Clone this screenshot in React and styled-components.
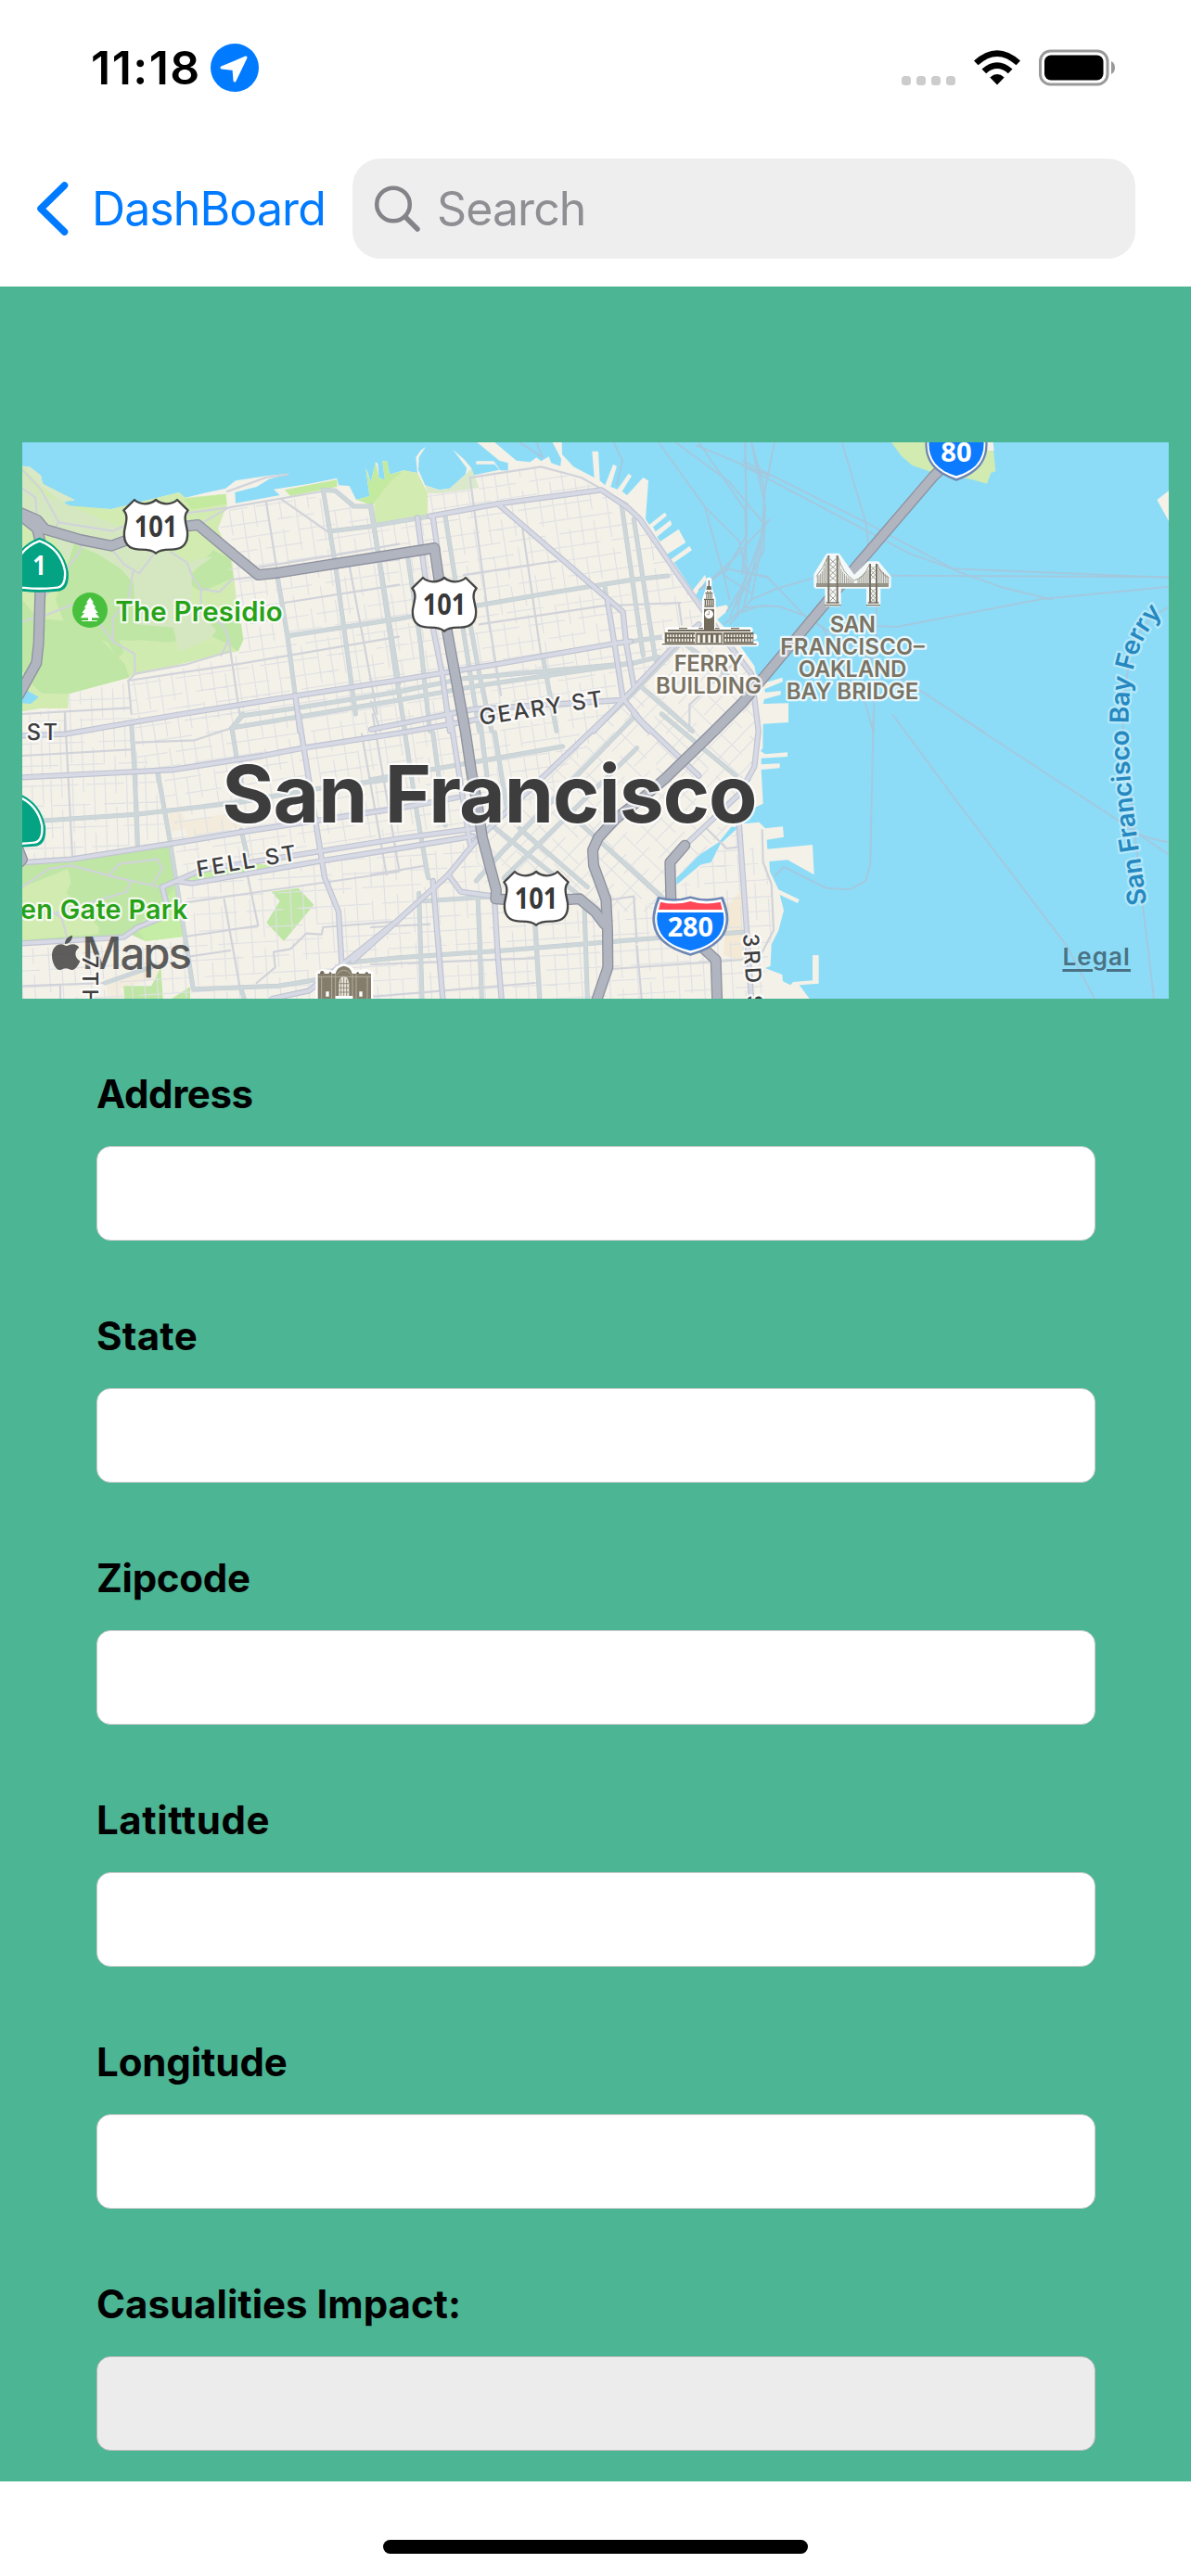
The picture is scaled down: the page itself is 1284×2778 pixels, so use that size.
import React from "react";
import styled, { createGlobalStyle } from "styled-components";

const GlobalStyle = createGlobalStyle`
  * { box-sizing: border-box; }
  body { margin: 0; background: #fff; }
`;

const Screen = styled.div`
  display: flex;
  flex-direction: column;
  width: 1284px;
  height: 2778px;
  overflow: hidden;
  background: #fff;
  color: #000;
  font-family: Inter, "Liberation Sans", sans-serif;
`;

const StatusBar = styled.header`
  display: flex;
  align-items: center;
  justify-content: space-between;
  height: 146px;
  padding: 0 80px 0 98px;
`;

const Cluster = styled.div`
  display: flex;
  align-items: center;
  gap: ${(p) => p.$gap}px;
`;

const Clock = styled.time`
  width: 119px;
  font-size: 50px;
  font-weight: 600;
  line-height: 60px;
  letter-spacing: 1.5px;
  white-space: nowrap;
`;

const NavBar = styled.nav`
  display: flex;
  align-items: center;
  height: 163px;
  padding: 0 60px 5px 36px;
`;

const BackButton = styled.a`
  display: flex;
  flex: none;
  align-items: center;
  gap: 21px;
  width: 344px;
  color: #007aff;
  font-size: 50px;
  line-height: 60px;
  letter-spacing: -0.9px;
`;

const SearchField = styled.label`
  display: flex;
  flex: 1;
  align-items: center;
  gap: 17px;
  min-width: 0;
  height: 108px;
  padding-left: 22px;
  border-radius: 30px;
  background: #eeeeef;
`;

const SearchInput = styled.input`
  flex: 1;
  min-width: 0;
  padding: 0;
  border: 0;
  outline: 0;
  background: none;
  font: 400 50px/60px Inter, "Liberation Sans", sans-serif;
  letter-spacing: -0.9px;
  &::placeholder { color: #8e8e93; opacity: 1; }
`;

const Content = styled.main`
  height: 2367px;
  padding: 168px 24px 0;
  background: #4bb594;
`;

const MapFrame = styled.section`
  position: relative;
  height: 600px;
  overflow: hidden;
`;

const MapCanvas = styled.svg`
  display: block;
  width: 1236px;
  height: 600px;
  font-family: Inter, "Liberation Sans", sans-serif;
`;

const LegalLink = styled.a`
  position: absolute;
  right: 41px;
  bottom: 29px;
  color: #4a7284;
  font-size: 26px;
  font-weight: 600;
  line-height: 32px;
  letter-spacing: 1.1px;
  text-decoration: underline;
  text-decoration-thickness: 3px;
  text-underline-offset: 4px;
`;

const Form = styled.form`
  display: flex;
  flex-direction: column;
  padding: 69px 79px 0 80px;
`;

const Field = styled.label`
  display: flex;
  flex-direction: column;
  gap: 30px;
  height: 261px;
  padding-top: 8px;
`;

const FieldName = styled.span`
  height: 52px;
  font-size: 42px;
  font-weight: 700;
  line-height: 52px;
  letter-spacing: ${(p) => p.$tracking}px;
`;

const FieldInput = styled.input`
  width: 1077px;
  height: 102px;
  border: 1px solid ${(p) => (p.disabled ? "#b9b9b9" : "#cccccc")};
  border-radius: 15px;
  outline: 0;
  padding: 0 20px;
  background: ${(p) => (p.disabled ? "#ececec" : "#fff")};
  font-size: 42px;
`;

const HomeArea = styled.footer`
  display: flex;
  flex: 1;
  justify-content: center;
  padding-top: 63px;
`;

const HomeIndicator = styled.div`
  width: 458px;
  height: 15px;
  border-radius: 8px;
  background: #000;
`;

/* ---------- map geometry (thirds of a pixel, one origin per tile) ---------- */

const TILE = {
  nw: [0, 1380], n: [1200, 1380], ne: [2400, 1380],
  sw: [0, 2310], s: [1200, 2310], se: [2400, 2310],
};

const trace = (...parts) => {
  const pts = [];
  for (const [tile, text] of parts) {
    const [ox, oy] = TILE[tile];
    for (const pair of text.trim().split(/\s+/)) {
      const [x, y] = pair.split(",").map(Number);
      pts.push(`${x + ox},${y + oy}`);
    }
  }
  return "M" + pts.join(" L");
};

const COAST = [
  ["nw", "72,128 95,130 132,158 138,185 170,205 242,238 205,240 215,255 250,262 360,267 398,258 580,213 575,232 600,230 660,215 730,200 762,175 860,160 935,152 870,170 830,195 760,213 762,248 905,222 885,203 1000,185 1090,167 1095,190 1130,192 1152,237 1195,225 1183,135 1190,150 1199,182 1215,115 1222,120 1225,165 1245,173 1237,112 1252,112 1260,155"],
  ["n", "60,155 105,142 150,150 145,100 160,78 177,65 155,100 153,140 175,190 220,205 255,200 305,155 310,135 265,75 300,105 325,135 328,158 415,140 400,122 340,122 340,112 397,112 418,142 443,142 443,118 415,110 343,51 400,51 470,110 515,115 535,100 550,112 575,97 583,118 613,128 615,105 587,51 617,51 618,90 655,130 722,165 715,80 735,80 740,175 757,190 783,122 795,128 775,195 797,203 833,152 843,160 812,210 828,222 880,165 897,175 888,300 900,317 950,278 957,288 912,325 920,340 968,303 973,317 925,357 935,372 995,332 1018,375 955,415 970,430 1030,387 1038,400 980,440 1040,530 1080,480 1085,495 1050,545 1090,590 1150,577 1158,592 1120,625 1180,690 1240,775 1245,800"],
  ["ne", "70,830 130,812 132,825 72,850 75,860 125,855 125,868 72,882 68,897 150,895 150,957"],
  ["se", "150,27 68,32 67,110 60,120 75,130 147,124 147,138 62,143 62,163 122,160 122,175 62,180 68,290 35,305 5,355 55,350 75,370 132,364 135,398 80,407 82,437 228,423 233,520 147,472 88,477 90,510 118,568 185,600 180,612 122,585 135,635 118,700 95,745 92,815 75,822 130,843 132,865 157,877 165,867 228,862 228,780 248,780 248,872 185,877 225,930"],
  ["sw", "60,930"],
];

const AREAS = [
  ["#d1ebb1", ["nw", "72,128 95,130 132,158 138,185 242,238 205,240 215,255 360,267 580,213 600,230 730,218 735,250 705,330 750,430 765,560 787,690 770,727 660,750 440,803 222,865 220,912 130,912 72,922"]],
  ["#d5e7c1", ["nw", "72,150 130,215 240,262 400,330 480,400 600,440 600,520 500,550 420,610 300,570 200,400 150,330 72,270"]],
  ["#bfe6a5", ["nw", "240,380 320,415 390,460 480,560 560,500 600,590 700,600 780,640 787,690 770,727 730,700 620,650 560,700 440,690 380,750 350,700 210,640 180,560"]],
  ["#d0ebb0", ["nw", "385,690 520,700 640,690 740,730 440,803 405,740"]],
  ["#bfe6a5", ["nw", "72,560 120,620 220,630 290,650 405,770 418,812 222,865 135,863 90,820 72,790"]],
  ["#bfe6a5", ["nw", "600,500 690,400 745,430 755,490 650,535"]],
  ["#d5e7c1", ["nw", "430,480 530,400 600,440 690,420 620,470 620,570 700,660 680,685 580,730 560,650 440,640"]],
  ["#c3ea9f", ["nw", "595,235 730,218 733,250 620,268"]],
  ["#c3ea9f", ["nw", "920,205 1090,172 1090,195 940,225"]],
  ["#d9e8c6", ["nw", "72,128 95,130 132,158 138,185 242,238 200,245 130,190"]],
  ["#8cdcf8", ["nw", "72,845 125,875 100,897 72,895"]],
  ["#c3ea9f", ["nw", "1152,237 1195,225 1183,135 1199,182 1215,115 1225,165 1245,173 1237,112 1252,112 1260,155 1310,142 1340,150 1270,190 1215,240 1205,255"]],
  ["#d1ebb1", ["n", "10,245 60,180 105,142 150,150 183,215 183,285 12,312"]],
  ["#dbe9cb", ["n", "175,190 220,205 255,200 305,155 325,135 350,198 220,217 183,215"]],
  ["#bfe6a5", ["sw", "72,488 230,478 548,430 590,720 470,735 420,712 72,735"]],
  ["#d1ebb1", ["sw", "72,560 220,500 230,545 215,580 320,690 320,712 72,732"]],
  ["#c6eda6", ["sw", "440,690 575,555 594,720 470,735"]],
  ["#c6eda6", ["sw", "590,535 660,505 830,485 900,490 620,545"]],
  ["#bfe6a5", ["sw", "878,575 965,563 1015,617 918,735 862,675 905,605"]],
  ["#f3ecdc", ["sw", "543,322 590,318 598,345 720,325 770,345 780,365 605,400 598,372 553,380"]],
  ["#f3ecdc", ["sw", "345,875 520,820 520,850 390,890 400,921 350,921"]],
  ["#bfe6a5", ["sw", "400,880 490,880 520,820 527,921 402,921"]],
  ["#bfe6a5", ["sw", "555,921 615,883 615,921"]],
  ["#f3e9d4", ["s", "1150,620 1200,570 1205,800 1140,780"]],
  ["#8cdcf8", ["s", "988,530 1055,460 1125,415 1165,365 1190,365 1130,420 1100,480 1065,488 988,553"]],
  ["#d1ebb1", ["ne", "483,51 605,51 790,51 813,75 820,145 805,150 792,185 740,170 620,150 550,125 515,95"]],
  ["#f4f1e8", ["ne", "790,51 812,51 815,78 795,78"]],
  ["#f4f1e8", ["ne", "1342,237 1380,208 1380,306"]],
];

/* hierarchy: lane < street < avenue < boulevard < freeway */
const KIND = {
  lane: { w: 3.5, fill: "#e0e1e5" },
  street: { w: 6.5, fill: "#d1d3da" },
  avenue: { w: 12, fill: "#cdd6d9", edge: "#c4cdd3", ew: 15 },
  boulevard: { w: 12, fill: "#d7d9e5", edge: "#bfc4d1", ew: 19 },
  freeway: { w: 28, fill: "#b1b5c0", edge: "#8e929f", ew: 36 },
};

const ROADS = [
  ["street", ["nw", "72,200 115,230 120,300"]],
  ["street", ["nw", "72,140 130,200 190,310 365,338 450,300 740,262 1040,210"]],
  ["street", ["nw", "190,310 170,340"]],
  ["street", ["nw", "150,545 255,410 265,380"]],
  ["street", ["nw", "360,395 400,445 450,475 500,410"]],
  ["street", ["nw", "430,470 415,560 365,620 365,695 435,735 437,800 415,822 425,930"]],
  ["street", ["nw", "550,405 605,440 620,480 650,525 710,535 750,495 1290,430"]],
  ["street", ["nw", "650,525 650,600 720,640 740,690 715,740"]],
  ["street", ["nw", "72,630 150,610 235,575"]],
  ["street", ["nw", "325,640 365,695"]],
  ["street", ["nw", "740,262 640,320"]],
  ["street", ["nw", "735,210 860,165 930,155"]],
  ["street", ["nw", "860,240 900,490"]],
  ["street", ["nw", "910,235 1060,340"]],
  ["street", ["nw", "740,690 775,930"]],
  ["street", ["nw", "415,822 760,770 1290,680"]],
  ["street", ["nw", "437,800 600,770 740,728"]],
  ["street", ["nw", "840,455 1120,410 1290,380"]],
  ["street", ["nw", "920,570 1290,512"]],
  ["street", ["nw", "1130,450 1220,930"]],
  ["street", ["nw", "72,930 420,910"]],
  ["street", ["nw", "210,925 210,985"]],
  ["avenue", ["nw", "1045,205 1085,450 1150,930"]],
  ["avenue", ["nw", "1045,205 1085,208 1145,258 1198,258 1230,450 1290,830"]],
  ["avenue", ["nw", "1070,338 1210,322"], ["n", "10,320 190,290"]],
  ["avenue", ["nw", "898,490 930,680 955,870"]],
  ["avenue", ["nw", "930,677 1290,622"], ["n", "90,622 180,605"]],
  ["avenue", ["nw", "750,975 785,935 950,912 1290,858"], ["n", "90,858 300,815 850,765"]],
  ["avenue", ["nw", "750,975 1290,885"], ["n", "90,885 350,838 850,765 930,745"]],
  ["avenue", ["sw", "785,0 750,45 765,140"]],
  ["avenue", ["sw", "425,30 435,180 445,430"]],
  ["avenue", ["sw", "510,190 548,400 625,890 900,880 1020,860"]],
  ["avenue", ["sw", "140,345 440,325 780,285 780,145"], ["sw", "780,285 1000,245 1290,208"]],
  ["avenue", ["sw", "780,375 800,460"]],
  ["avenue", ["sw", "1120,805 1290,788"], ["s", "90,788 430,765 860,730 1210,705"]],
  ["avenue", ["sw", "780,890 790,921"]],
  ["avenue", ["sw", "340,870 500,815"]],
  ["avenue", ["n", "0,255 80,800 110,985"]],
  ["avenue", ["n", "240,290 270,480 350,985"]],
  ["avenue", ["n", "120,430 160,700 190,985"]],
  ["avenue", ["n", "310,580 350,800 390,985"]],
  ["avenue", ["n", "340,580 600,535 850,495 960,483"]],
  ["avenue", ["n", "810,250 880,740"]],
  ["avenue", ["n", "850,300 920,755"]],
  ["avenue", ["n", "755,510 765,580"]],
  ["avenue", ["n", "555,740 600,985"]],
  ["avenue", ["n", "840,695 985,675"]],
  ["avenue", ["s", "105,30 150,330 185,530"]],
  ["avenue", ["s", "200,60 240,360"]],
  ["avenue", ["s", "350,0 375,200"]],
  ["avenue", ["s", "400,60 440,310"]],
  ["avenue", ["s", "0,212 280,165 620,105"]],
  ["avenue", ["s", "155,580 165,921"]],
  ["avenue", ["s", "345,580 358,921"]],
  ["avenue", ["s", "530,680 545,921"]],
  ["avenue", ["s", "690,620 700,921"]],
  ["avenue", ["s", "170,605 400,590"]],
  ["avenue", ["s", "340,540 430,440 860,0"]],
  ["avenue", ["s", "390,360 740,640"]],
  ["avenue", ["s", "480,370 700,560"]],
  ["avenue", ["s", "650,330 950,600"]],
  ["avenue", ["s", "430,530 860,110"]],
  ["avenue", ["s", "940,0 1180,200"]],
  ["avenue", ["n", "860,830 1040,985"]],
  ["avenue", ["n", "1010,700 1200,840"]],
  ["avenue", ["n", "1060,640 850,860 720,985"]],
  ["street", ["n", "320,165 550,130 680,165 830,250"]],
  ["street", ["n", "320,165 380,620 420,870"]],
  ["street", ["n", "490,330 550,740"]],
  ["street", ["n", "300,480 600,435"]],
  ["street", ["n", "350,640 750,580 1000,570"]],
  ["street", ["n", "995,570 1005,640"]],
  ["street", ["n", "0,890 30,985"]],
  ["street", ["n", "1030,985 1030,900 1180,760"]],
  ["street", ["sw", "72,135 420,115"]],
  ["street", ["sw", "210,0 235,480"]],
  ["street", ["sw", "440,92 630,85 750,45"]],
  ["street", ["sw", "72,560 160,500 230,490 380,530 520,560"]],
  ["street", ["sw", "160,650 410,575 420,545"]],
  ["street", ["sw", "170,640 200,660 220,735"]],
  ["street", ["sw", "350,525 385,485 510,470 525,500 495,550"]],
  ["street", ["sw", "600,610 1290,510"]],
  ["street", ["sw", "725,600 775,880"]],
  ["street", ["sw", "800,520 835,685 600,720"]],
  ["street", ["sw", "610,785 745,765"]],
  ["street", ["sw", "1290,670 1045,690 1040,713 990,710 940,760 885,770 890,820 830,870"]],
  ["street", ["sw", "72,880 340,870"]],
  ["street", ["sw", "195,880 195,921"]],
  ["street", ["sw", "1170,65 1250,520"]],
  ["street", ["sw", "1205,0 1290,500"]],
  ["street", ["s", "0,520 180,490"]],
  ["street", ["s", "0,690 190,680"]],
  ["street", ["s", "0,810 530,790"]],
  ["street", ["s", "780,825 1200,795"]],
  ["street", ["s", "860,750 875,921"]],
  ["street", ["s", "0,915 530,870"]],
  ["street", ["s", "1085,370 1150,435 1190,430"]],
  ["street", ["s", "1265,375 1268,480 1295,550 1302,700 1265,770"]],
  ["street", ["s", "780,600 850,590 860,740"]],
  ["street", ["s", "560,260 700,380 940,600"]],
  ["boulevard", ["sw", "72,70 210,65 440,25 590,0"], ["nw", "590,930 900,880 1290,820"], ["n", "90,820 400,770 800,700 840,695"]],
  ["boulevard", ["sw", "72,205 430,187 560,180 850,135 980,110 1290,62"], ["s", "90,62 360,15 420,5"]],
  ["boulevard", ["sw", "80,480 230,470 550,420 780,382 1290,305"], ["s", "90,305 280,270"]],
  ["boulevard", ["sw", "72,742 400,722 445,690 520,660"]],
  ["boulevard", ["sw", "525,560 540,620"]],
  ["boulevard", ["sw", "525,560 650,505 1030,445 1290,403"], ["s", "90,403 340,370"]],
  ["boulevard", ["sw", "570,540 620,548 1040,475 1290,435"], ["s", "90,435 330,395"]],
  ["boulevard", ["nw", "955,870 970,985"], ["sw", "965,0 1050,530 1095,640 1105,805 1110,900"]],
  ["boulevard", ["sw", "880,921 1000,895 1290,665"], ["s", "-60,800 250,520 340,410 770,0"], ["n", "720,985 980,710 1060,640"]],
  ["boulevard", ["n", "150,295 190,600 230,800 255,985"], ["s", "255,0 320,420"]],
  ["boulevard", ["n", "200,290 215,400"]],
  ["boulevard", ["n", "190,290 410,250 745,205 830,262 870,300 1000,490 1100,630 1230,800 1253,985"], ["s", "1240,170 1190,260 1010,430"]],
  ["boulevard", ["n", "410,250 815,600 825,700 850,840"]],
  ["boulevard", ["n", "765,565 790,720 815,880 900,985"], ["s", "850,0 1060,200"]],
  ["boulevard", ["n", "0,980 330,915 810,885"]],
  ["boulevard", ["s", "1190,350 1215,700 1230,921"]],
  ["boulevard", ["s", "200,540 220,780 232,921"]],
  ["boulevard", ["s", "400,610 410,780 422,921"]],
  ["boulevard", ["s", "250,520 290,575 400,590"]],
  ["freeway", ["nw", "40,268 120,302 145,332 260,366 360,386 500,335 640,318 750,410 835,480 900,473 1405,393 1435,600 1505,985"], ["s", "325,190 345,300 360,400 405,570 403,598 500,605 640,600"]],
  ["freeway", ["nw", "60,282 120,330 132,380 130,530 125,700 118,765 60,870"]],
  ["freeway", ["ne", "693,90 620,160 380,440 0,895"], ["s", "1110,55 950,210 880,270 790,340 735,400 717,440 720,490 760,600 765,700 766,820 725,940"]],
  ["freeway", ["s", "640,600 675,598 725,640 755,680"]],
  ["freeway", ["s", "1015,425 967,480 970,600 1000,690 1115,795 1120,940"]],
  ["freeway", ["sw", "60,440 72,470 50,495"]],
];

const FERRIES = [
  ["ne", "10,51 15,350 0,480"], ["ne", "30,51 72,200 70,330 0,600"], ["ne", "105,51 75,200 60,400 30,560 -40,640"],
  ["ne", "0,110 400,310 700,470 840,520 1005,560"], ["ne", "0,125 200,230 540,410 680,460 1380,488"],
  ["ne", "323,51 400,310 410,395"], ["ne", "480,482 1380,487"], ["ne", "435,645 500,648 970,558 1380,518"],
  ["ne", "230,490 110,525 30,560"], ["ne", "0,600 60,580 120,582 200,610 260,650 400,900 425,990"],
  ["ne", "0,470 80,485 200,610 400,740 570,850 785,990"], ["ne", "435,580 425,990"],
  ["n", "930,51 1080,260 1190,370 1215,480 1160,620"], ["n", "985,51 1160,180 1275,320 1210,500 1150,600"],
  ["n", "1060,51 1210,270 1215,470 1180,620"], ["n", "785,51 813,110 795,190"], ["n", "480,51 555,100 535,51"],
  ["n", "1050,60 1290,160"], ["n", "1210,51 1215,350 1140,480 1160,560"], ["n", "1290,300 1170,430 1060,530"],
  ["n", "1230,51 1275,260 1270,400 1180,580"], ["n", "1290,490 1150,460 1060,530"], ["n", "1290,580 1210,585 1140,640"],
  ["n", "1080,260 1140,480 1230,540"],
  ["se", "425,0 415,485 400,540 348,568 272,563 135,495 105,525"],
  ["se", "485,0 700,290 1050,750 1140,921"], ["se", "690,0 1225,350 1380,455"], ["se", "1280,388 1320,402 1380,415"],
  ["se", "1228,0 1260,300 1295,610 1332,921"], ["ne", "1380,585 1330,610 1260,700 1228,930"],
];

const grid = (angle, stepU, stepV, seed) => {
  const lines = [];
  for (let i = -60; i <= 60; i++) {
    const u = i * stepU + ((i * seed) % 9);
    lines.push(`M${u},${-3000 + ((i * 97) % 211)} V3000`);
    lines.push(`M${-3000 + ((i * 61) % 173)},${i * stepV + ((i * 5) % 7)} H3000`);
  }
  return { d: lines.join(" "), angle };
};

const NORTH = [
  ["nw", "745,265 1000,225 1160,260 1210,320"],
  ["n", "12,312 183,285 183,218 340,195 320,160 550,125 740,200 870,300 1040,540 1120,640 820,880 560,1210 340,1280"],
  ["sw", "850,460 610,520 550,410 510,190 440,140"],
  ["nw", "420,825 770,740 787,690 710,330"],
];
const WEST = [
  ["nw", "222,865 420,825"],
  ["sw", "440,120 510,190 548,425 72,480"],
  ["nw", "72,925 220,912"],
];
const SOMA = [
  ["n", "1100,680 1240,800"],
  ["s", "1250,160 1180,340 1000,520 900,640 740,640 340,540 340,400 830,-50"],
];
const SOUTH = [
  ["s", "-600,530 0,460 340,400 360,570 740,650 960,600 1190,370 1290,510 1300,700 1260,921 -1128,921 -1128,760 -590,735"],
];

const BLOCKS = [
  { id: "north", clip: trace(...NORTH), ...grid(-8.5, 43, 46, 7), at: [1200, 2100] },
  { id: "west", clip: trace(...WEST), ...grid(-2, 33, 67, 2), at: [300, 2400] },
  { id: "soma", clip: trace(...SOMA), ...grid(44, 42, 56, 5), at: [2000, 2600] },
  { id: "south", clip: trace(...SOUTH), ...grid(-3.5, 44, 49, 6), at: [1600, 2900] },
];

const Road = ({ kind, parts, edge }) => {
  const k = KIND[kind];
  return (
    <path
      d={trace(...parts)}
      fill="none"
      stroke={edge ? k.edge : k.fill}
      strokeWidth={edge ? k.ew : k.w}
      strokeLinejoin="round"
      strokeLinecap="round"
    />
  );
};

const HALO = { paintOrder: "stroke", stroke: "rgba(255,255,255,0.8)", strokeWidth: 14, strokeLinejoin: "round" };

const Label = ({ tile, x, y, size, length, angle = 0, weight = 500, fill = "#3d3d3d", anchor = "start", children }) => {
  const [ox, oy] = TILE[tile];
  return (
    <text
      {...HALO}
      transform={`translate(${ox + x} ${oy + y}) rotate(${angle})`}
      fontSize={size}
      fontWeight={weight}
      fill={fill}
      textAnchor={anchor}
      textLength={length}
    >
      {children}
    </text>
  );
};

const ShieldText = ({ y, size, width, fill, children }) => (
  <text y={y} textAnchor="middle" fontFamily='"Noto Sans", "Open Sans", sans-serif' fontWeight="700" fontSize={size} fill={fill} textLength={width} lengthAdjust="spacingAndGlyphs">
    {children}
  </text>
);

const UsShield = ({ x, y }) => (
  <g transform={`translate(${x} ${y})`}>
    <path
      d="M-69,-86 Q-57,-74 -35,-73 Q-14,-74 0,-86 Q14,-74 35,-73 Q57,-74 69,-86 L104,-52 Q91,-36 96,-14 L102,16 Q107,74 52,75 Q14,74 0,87 Q-14,74 -52,75 Q-107,74 -102,16 L-96,-14 Q-91,-36 -104,-52 Z"
      fill="#fff" stroke="#454545" strokeWidth="7" strokeLinejoin="round"
    />
    <ShieldText y={34} size={95} width={140} fill="#383838">101</ShieldText>
  </g>
);

const INTERSTATE = "M-104,-92 Q-50,-78 0,-94 Q50,-78 104,-92 Q124,-42 119,-10 Q112,62 0,93 Q-112,62 -119,-10 Q-124,-42 -104,-92 Z";

const Interstate = ({ x, y, sx = 1, sy = 1, children, width, textY = 34 }) => (
  <g transform={`translate(${x} ${y})`}>
    <g transform={`scale(${sx} ${sy})`}>
      <path d={INTERSTATE} fill="#6e87b4" stroke="#6e87b4" strokeWidth="6" strokeLinejoin="round" />
      <path d={INTERSTATE} fill="#fff" transform="scale(.955 .945)" />
      <path d="M-97,-78 Q-48,-66 0,-80 Q48,-66 97,-78 L103,-53 H-103 Z" fill="#ff4757" />
      <path d="M-106,-44 H106 Q112,-15 102,10 Q84,60 0,80 Q-84,60 -102,10 Q-112,-15 -106,-44 Z" fill="#0d7bff" />
    </g>
    <ShieldText y={textY} size={86} width={width} fill="#fff">{children}</ShieldText>
  </g>
);

const StateShield = ({ x, y, children }) => {
  const d = "M0,-86 Q75,-58 91,22 Q96,84 55,84 Q0,90 -55,84 Q-96,84 -91,22 Q-75,-58 0,-86 Z";
  return (
    <g transform={`translate(${x} ${y})`}>
      <path d={d} fill="#03a383" stroke="#03a383" strokeWidth="4" />
      <path d={d} fill="none" stroke="#fff" strokeWidth="8" transform="scale(.9 .89)" />
      {children && <ShieldText y={32} size={86} width={44} fill="#fff">{children}</ShieldText>}
    </g>
  );
};

const range = (n) => Array.from({ length: n }, (_, i) => i);

const FerryBuilding = () => (
  <g transform="translate(1200 1380)">
    <path d="M1093,497 V520 L1080,560 V655 M950,680 H1240 M945,703 H1245 M960,658 H1226 M1093,520 L1106,560 V655 M1093,530 V655" stroke="#fff" strokeWidth="18" fill="none" strokeLinejoin="round" strokeLinecap="round" />
    <g fill="#726b5b">
      <path d="M1091,497 h4 v20 h-4 Z M1087,516 h12 l3,12 h-18 Z M1087,531 h3 v7 h-3 Z M1096,531 h3 v7 h-3 Z M1081,537 h24 v4 h-24 Z M1077,557 h32 v4 h-32 Z M1078,580 h31 v4 h-31 Z M1077,590 h33 v70 h-33 Z" />
      {range(4).map((i) => <rect key={i} x={1084 + i * 5.5} y="541" width="3" height="16" />)}
      {range(5).map((i) => <rect key={i} x={1079 + i * 6.5} y="561" width="4" height="19" />)}
      <rect x="960" y="657" width="267" height="6" />
      <path d="M996,651 h27 v4 h-27 Z M1060,651 h14 v4 h-14 Z M1113,651 h14 v4 h-14 Z M1164,651 h27 v4 h-27 Z" />
      <rect x="950" y="666" width="287" height="35" />
      <rect x="941" y="702" width="306" height="4" />
    </g>
    <circle cx="1093" cy="607" r="14" fill="#fff" />
    <path d="M1093,597 V608 H1085" fill="none" stroke="#726b5b" strokeWidth="2" />
    <g fill="#f6f4ee">
      {range(10).map((i) => <path key={i} d={`M${957 + i * 9.5},673 h5 v8 h-5 Z M${957 + i * 9.5},686 h5 v10 h-5 Z M${1144 + i * 9.5},673 h5 v8 h-5 Z M${1144 + i * 9.5},686 h5 v10 h-5 Z`} />)}
      {range(5).map((i) => <rect key={i} x={1056 + i * 17} y="674" width="8" height="25" />)}
      <path d="M1048,664 h90 v3 h-90 Z M1048,664 h3 v38 h-3 Z M1136,664 h3 v38 h-3 Z" />
    </g>
  </g>
);

const BayBridge = () => (
  <g transform="translate(2400 1380)" fill="none" stroke="#7a7364">
    <path d="M278,418 H310 L362,492 L410,444 H438 L474,488 V516 H240 V480 Z M276,516 V575 H312 V516 Z M410,516 V575 H440 V516 Z" stroke="#f3f8f8" strokeWidth="16" fill="#f3f8f8" strokeLinejoin="round" />
    <g strokeWidth="2">
      <path d="M240,485 Q262,460 278,420 M310,420 Q325,475 362,498 Q395,490 412,446 M438,446 Q450,480 474,488" />
      {range(7).map((i) => <path key={i} d={`M${244 + i * 5},${482 - i * i * 1.5} V508`} />)}
      {range(9).map((i) => <path key={i} d={`M${315 + i * 5.5},${440 + Math.sqrt(i) * 21} V508`} />)}
      {range(7).map((i) => <path key={i} d={`M${375 + i * 5.5},${493 - i * 5} V508`} />)}
      {range(7).map((i) => <path key={i} d={`M${442 + i * 5.2},${456 + i * 5} V508`} />)}
      <path d="M284,428 l20,18 l-20,18 l20,18 l-20,18 M304,428 l-20,18 l20,18 l-20,18 l20,18 M284,525 l20,20 l-20,20 M304,525 l-20,20 l20,20" />
      <path d="M417,452 l14,14 l-14,14 l14,14 M431,452 l-14,14 l14,14 l-14,14 M417,525 l14,15 l-14,15 l14,12 M431,525 l-14,15 l14,15 l-14,12" />
    </g>
    <path d="M240,510 H474 M240,516 H474" strokeWidth="4" />
    <path d="M280,417 V572 M308,417 V572 M414,444 V572 M435,444 V572" strokeWidth="6" />
    <path d="M272,570 H314 M267,578 H320 M407,570 H442 M402,578 H447" strokeWidth="4" />
  </g>
);

const Mission = () => (
  <g transform="translate(0 2310)">
    <path d="M1028,935 V840 L1042,832 L1080,838 Q1090,818 1112,815 Q1134,818 1144,838 L1185,832 L1200,840 V935 Z" fill="#8a8270" stroke="#fff" strokeWidth="14" strokeLinejoin="round" />
    <path d="M1028,935 V840 H1085 Q1090,818 1112,815 Q1134,818 1139,840 H1200 V935 Z" fill="#857d6b" />
    <path d="M1035,840 Q1035,831 1042,831 Q1049,831 1049,840 Z M1063,840 q5,-12 10,0 Z M1152,840 q5,-12 10,0 Z M1180,840 q6,-12 12,0 Z" fill="#756d5c" />
    <path d="M1028,850 H1200 M1085,842 V921 M1140,842 V921 M1073,842 V921 M1152,842 V921 M1040,850 V921 M1188,850 V921 M1090,842 Q1112,815 1135,842" stroke="#b5ae9d" strokeWidth="3" fill="none" />
    <path d="M1096,921 V872 Q1098,850 1112,850 Q1127,850 1129,872 V921 Z" fill="#e8e4d9" />
    <path d="M1103,858 V921 M1112,852 V921 M1121,858 V921 M1097,872 H1128 M1097,886 H1128 M1097,900 H1128" stroke="#857d6b" strokeWidth="2.5" />
    <path d="M1054,898 h10 v16 h-10 Z M1162,898 h10 v16 h-10 Z M1085,912 h56 v9 h-56 Z" fill="#fff" />
  </g>
);

const CityMap = () => (
  <MapCanvas viewBox="72 1431 3708 1800" role="img" aria-label="Map of San Francisco">
    <defs>
      {BLOCKS.map((b) => <clipPath key={b.id} id={b.id}><path d={b.clip + "Z"} /></clipPath>)}
      <path id="ferry-route" d="M3709,2925 L3684,2750 Q3653,2560 3650,2370 L3650,2320 C3652,2190 3670,2050 3790,1960" />
    </defs>
    <rect x="72" y="1431" width="3708" height="1800" fill="#8cdcf8" />
    <path d={trace(...COAST) + "Z"} fill="#f4f1e8" />
    {AREAS.map(([fill, part], i) => <path key={i} d={trace(part) + "Z"} fill={fill} />)}
    {BLOCKS.map((b) => (
      <g key={b.id} clipPath={`url(#${b.id})`}>
        <path
          d={b.d}
          transform={`translate(${b.at[0]} ${b.at[1]}) rotate(${b.angle})`}
          fill="none"
          stroke={KIND.lane.fill}
          strokeWidth={KIND.lane.w}
          strokeDasharray="190 28 120 45 240 36"
        />
      </g>
    ))}
    <g fill="none" stroke="#a3c9df" strokeWidth="6" strokeLinejoin="round">
      {FERRIES.map((part, i) => <path key={i} d={trace(part)} />)}
    </g>
    {["street", "avenue", "boulevard", "freeway"].map((kind) => {
      const set = ROADS.filter(([k]) => k === kind);
      return (
        <g key={kind}>
          {KIND[kind].edge && set.map(([, ...parts], i) => <Road key={`e${i}`} kind={kind} parts={parts} edge />)}
          {set.map(([, ...parts], i) => <Road key={i} kind={kind} parts={parts} />)}
        </g>
      );
    })}

    <FerryBuilding />
    <BayBridge />
    <Mission />

    <g transform="translate(291 1974)">
      <circle r="57" fill="#49c03d" />
      <path d="M0,-41 L12,-25 H7 L19,-8 H13 L26,9 H18 L31,25 H6 V33 H23 V36 H-26 V33 H-6 V25 H-31 L-18,9 H-26 L-13,-8 H-19 L-7,-25 H-12 Z" fill="#fff" />
    </g>
    <Label tile="nw" x={373} y={629} size={88} length={541} weight={600} fill="#27a217">The Presidio</Label>
    <Label tile="sw" x={66} y={663} size={86} length={541} weight={600} fill="#27a217">en Gate Park</Label>
    <Label tile="sw" x={86} y={83} size={71} length={100}>ST</Label>
    <Label tile="n" x={354} y={966} size={72} length={402} angle={-8.8}>GEARY ST</Label>
    <Label tile="sw" x={640} y={527} size={71} length={325} angle={-9.5}>FELL ST</Label>
    <Label tile="n" x={1092} y={792} size={72} length={224} weight={600} fill="#7a7363" anchor="middle">FERRY</Label>
    <Label tile="n" x={1092} y={863} size={72} length={342} weight={600} fill="#7a7363" anchor="middle">BUILDING</Label>
    <Label tile="ne" x={358} y={665} size={72} length={148} weight={600} fill="#7a7363" anchor="middle">SAN</Label>
    <Label tile="ne" x={357} y={738} size={72} length={466} weight={600} fill="#7a7363" anchor="middle">FRANCISCO–</Label>
    <Label tile="ne" x={357} y={810} size={72} length={350} weight={600} fill="#7a7363" anchor="middle">OAKLAND</Label>
    <Label tile="ne" x={357} y={882} size={72} length={428} weight={600} fill="#7a7363" anchor="middle">BAY BRIDGE</Label>
    <Label tile="s" x={1203} y={712} size={70} length={300} angle={86.5}>3RD ST</Label>
    <text {...HALO} stroke="rgba(255,255,255,.35)" fontSize="84" fontWeight="600" fill="#2588c0">
      <textPath href="#ferry-route" textLength="972">San Francisco Bay Ferry</textPath>
    </text>

    <UsShield x={504} y={1703} />
    <UsShield x={1437} y={1955} />
    <UsShield x={1734} y={2906} />
    <StateShield x={128} y={1827}>1</StateShield>
    <StateShield x={54} y={2652} />
    <Interstate x={2233} y={2996} width={148}>280</Interstate>
    <Interstate x={3093} y={1460} sx={0.82} sy={1} width={100} textY={34}>80</Interstate>

    <Label tile="sw" x={718} y={350} size={257} length={1732} weight={650} fill="#3d3d3d">San Francisco</Label>

    <g fill="#333" fillOpacity="0.78">
      <path transform="translate(168 3026)" d="M66,0 C67,15 55,28 42,28 C41,14 53,3 66,0 Z M68,29 C76,29 84,33 88,40 C71,50 73,75 91,83 C86,97 76,112 65,112 C57,112 54,107 45,107 C36,107 33,112 25,112 C13,112 0,88 0,66 C0,42 15,29 29,29 C38,29 41,34 47,34 C53,34 58,29 68,29 Z" />
      <text x="265" y="3136" fontSize="142" fontWeight="500" textLength="356">Maps</text>
    </g>
    <Label tile="sw" x={268} y={782} size={70} length={160} angle={90}>7TH</Label>
  </MapCanvas>
);

/* ---------- glyphs ---------- */

const LocationBadge = () => (
  <svg width="52" height="52" viewBox="0 0 52 52">
    <circle cx="26" cy="26" r="26" fill="#007aff" />
    <path d="M12,26 L38,15 L26,40 L25,27.5 Z" fill="#fff" stroke="#fff" strokeWidth="3" strokeLinejoin="round" />
  </svg>
);

const SignalDots = () => (
  <svg width="58" height="40" viewBox="0 0 58 40">
    {range(4).map((i) => <rect key={i} x={i * 16} y="29" width="10" height="10" rx="3.5" fill="#ccc" />)}
  </svg>
);

const WifiGlyph = () => (
  <svg width="50" height="38" viewBox="0 0 50 38">
    <path d="M0,11.6 Q25,-11 50,11.6 L45.500,16.300 Q25,-2.500 4.500,16.300 Z M8.500,20.400 Q25,6 41.500,20.400 L36.800,25.200 Q25,15 13.200,25.200 Z M17.300,29.400 Q25,22.500 32.700,29.400 L25,37.500 Z" fill="#000" />
  </svg>
);

const BatteryGlyph = () => (
  <svg width="84" height="40" viewBox="0 0 84 40">
    <rect x="1.500" y="2" width="72.500" height="36" rx="11" fill="none" stroke="#999" strokeWidth="3" />
    <rect x="6" y="6.500" width="63.500" height="27" rx="7" fill="#000" />
    <path d="M78,13 Q82,15 82,20 Q82,25 78,27 Z" fill="#999" />
  </svg>
);

const BackChevron = () => (
  <svg width="42" height="60" viewBox="0 0 42 60">
    <path d="M33.500,5 L8,30 L33.500,55" fill="none" stroke="#007aff" strokeWidth="7.500" strokeLinecap="round" strokeLinejoin="round" />
  </svg>
);

const SearchGlyph = () => (
  <svg width="52" height="52" viewBox="0 0 52 52">
    <circle cx="22" cy="21.500" r="17.800" fill="none" stroke="#848488" strokeWidth="4.500" />
    <path d="M35,35 L48,48" stroke="#848488" strokeWidth="5.500" strokeLinecap="round" />
  </svg>
);

const FIELDS = [
  { name: "Address", tracking: -0.4 },
  { name: "State", tracking: 0.3 },
  { name: "Zipcode", tracking: -0.3 },
  { name: "Latittude", tracking: 0.6 },
  { name: "Longitude", tracking: -0.1 },
  { name: "Casualities Impact:", tracking: 0, disabled: true },
];

export default function App() {
  return (
    <Screen>
      <GlobalStyle />
      <StatusBar>
        <Cluster $gap={10}>
          <Clock>11:18</Clock>
          <LocationBadge />
        </Cluster>
        <Cluster $gap={20}>
          <SignalDots />
          <WifiGlyph />
          <BatteryGlyph />
        </Cluster>
      </StatusBar>
      <NavBar>
        <BackButton>
          <BackChevron />
          DashBoard
        </BackButton>
        <SearchField>
          <SearchGlyph />
          <SearchInput placeholder="Search" />
        </SearchField>
      </NavBar>
      <Content>
        <MapFrame>
          <CityMap />
          <LegalLink>Legal</LegalLink>
        </MapFrame>
        <Form>
          {FIELDS.map((f) => (
            <Field key={f.name}>
              <FieldName $tracking={f.tracking}>{f.name}</FieldName>
              <FieldInput disabled={f.disabled} />
            </Field>
          ))}
        </Form>
      </Content>
      <HomeArea>
        <HomeIndicator />
      </HomeArea>
    </Screen>
  );
}
